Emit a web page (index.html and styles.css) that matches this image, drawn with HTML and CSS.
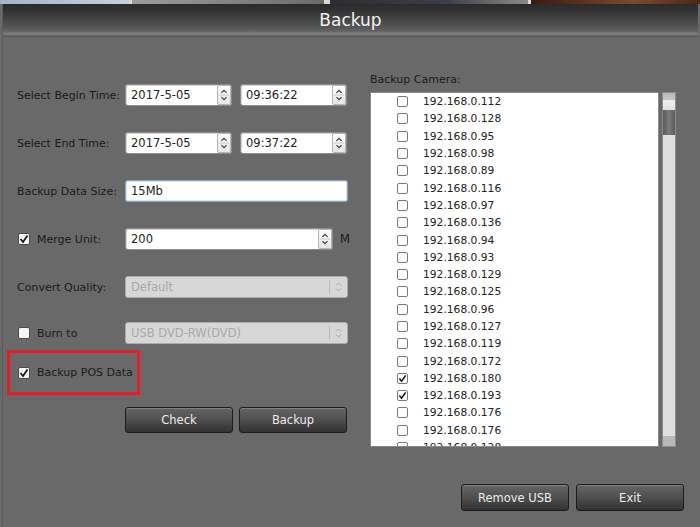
FILE: index.html
```html
<!DOCTYPE html>
<html lang="en">
<head>
    <meta charset="UTF-8">
    <title>Backup</title>
    <link rel="stylesheet" href="styles.css">
</head>
<body>
    <!-- Preview strip behind the dialog -->
    <div class="thumbs">
        <div class="thumb t1"></div>
        <div class="thumb t2"></div>
        <div class="thumb t3"></div>
        <div class="thumb t4"></div>
    </div>

    <div class="window">
        <div class="title-bar">Backup</div>

        <div class="main">
            <!-- Left: options -->
            <div class="left-col">
                <div class="form-rows">
                    <div class="row">
                        <span class="label">Select Begin Time:</span>
                        <div class="controls">
                            <div class="spin">
                                <span class="value">2017-5-05</span>
                                <svg class="arrows" width="14" height="20" viewBox="0 0 14 20"><path d="M4 7.5 L7 4.5 L10 7.5 M4 12.5 L7 15.5 L10 12.5" fill="none" stroke="#333" stroke-width="1.2"/><path d="M1 10 H13" stroke="#c4c4c4"/></svg>
                            </div>
                            <div class="spin">
                                <span class="value">09:36:22</span>
                                <svg class="arrows" width="14" height="20" viewBox="0 0 14 20"><path d="M4 7.5 L7 4.5 L10 7.5 M4 12.5 L7 15.5 L10 12.5" fill="none" stroke="#333" stroke-width="1.2"/><path d="M1 10 H13" stroke="#c4c4c4"/></svg>
                            </div>
                        </div>
                    </div>

                    <div class="row">
                        <span class="label">Select End Time:</span>
                        <div class="controls">
                            <div class="spin">
                                <span class="value">2017-5-05</span>
                                <svg class="arrows" width="14" height="20" viewBox="0 0 14 20"><path d="M4 7.5 L7 4.5 L10 7.5 M4 12.5 L7 15.5 L10 12.5" fill="none" stroke="#333" stroke-width="1.2"/><path d="M1 10 H13" stroke="#c4c4c4"/></svg>
                            </div>
                            <div class="spin">
                                <span class="value">09:37:22</span>
                                <svg class="arrows" width="14" height="20" viewBox="0 0 14 20"><path d="M4 7.5 L7 4.5 L10 7.5 M4 12.5 L7 15.5 L10 12.5" fill="none" stroke="#333" stroke-width="1.2"/><path d="M1 10 H13" stroke="#c4c4c4"/></svg>
                            </div>
                        </div>
                    </div>

                    <div class="row">
                        <span class="label">Backup Data Size:</span>
                        <div class="text-input"><span class="value">15Mb</span></div>
                    </div>

                    <div class="row">
                        <span class="label check-label">
                            <span class="box"><svg width="10" height="10" viewBox="0 0 10 10"><path d="M1.5 5 L4 8 L8.5 1.5" fill="none" stroke="#1a1a1a" stroke-width="1.8"/></svg></span>
                            Merge Unit:
                        </span>
                        <div class="controls">
                            <div class="spin wide">
                                <span class="value">200</span>
                                <svg class="arrows" width="14" height="20" viewBox="0 0 14 20"><path d="M4 7.5 L7 4.5 L10 7.5 M4 12.5 L7 15.5 L10 12.5" fill="none" stroke="#333" stroke-width="1.2"/><path d="M1 10 H13" stroke="#c4c4c4"/></svg>
                            </div>
                            <span class="unit">M</span>
                        </div>
                    </div>

                    <div class="row">
                        <span class="label">Convert Quality:</span>
                        <div class="combo">
                            <span class="value">Default</span>
                            <svg class="combo-arrows" width="16" height="16" viewBox="0 0 16 16"><path d="M0.5 1 V15" stroke="#bcbcbc"/><path d="M7 6.5 L9.5 4 L12 6.5 M7 9.5 L9.5 12 L12 9.5" fill="none" stroke="#a8a8a8" stroke-width="1"/></svg>
                        </div>
                    </div>

                    <div class="row row-burn">
                        <span class="label check-label">
                            <span class="box"></span>
                            Burn to
                        </span>
                        <div class="combo">
                            <span class="value">USB DVD-RW(DVD)</span>
                            <svg class="combo-arrows" width="16" height="16" viewBox="0 0 16 16"><path d="M0.5 1 V15" stroke="#bcbcbc"/><path d="M7 6.5 L9.5 4 L12 6.5 M7 9.5 L9.5 12 L12 9.5" fill="none" stroke="#a8a8a8" stroke-width="1"/></svg>
                        </div>
                    </div>
                </div>

                <!-- Highlighted option -->
                <div class="pos-box">
                    <span class="check-label">
                        <span class="box"><svg width="10" height="10" viewBox="0 0 10 10"><path d="M1.5 5 L4 8 L8.5 1.5" fill="none" stroke="#1a1a1a" stroke-width="1.8"/></svg></span>
                        Backup POS Data
                    </span>
                </div>

                <div class="action-row">
                    <button class="btn">Check</button>
                    <button class="btn">Backup</button>
                </div>
            </div>

            <!-- Right: camera list -->
            <div class="right-col">
                <div class="cam-title">Backup Camera:</div>
                <div class="cam-box">
                    <div class="cam-list" id="cam-list"></div>
                    <div class="scrollbar">
                        <div class="sb-cap"></div>
                        <div class="sb-thumb"></div>
                        <div class="sb-track"></div>
                        <div class="sb-end"></div>
                    </div>
                </div>
            </div>
        </div>

        <div class="footer">
            <button class="btn big">Remove USB</button>
            <button class="btn big">Exit</button>
        </div>
    </div>

    <script>
        // Camera list
        const cameras = [
            ['192.168.0.112', false], ['192.168.0.128', false], ['192.168.0.95', false],
            ['192.168.0.98', false], ['192.168.0.89', false], ['192.168.0.116', false],
            ['192.168.0.97', false], ['192.168.0.136', false], ['192.168.0.94', false],
            ['192.168.0.93', false], ['192.168.0.129', false], ['192.168.0.125', false],
            ['192.168.0.96', false], ['192.168.0.127', false], ['192.168.0.119', false],
            ['192.168.0.172', false], ['192.168.0.180', true], ['192.168.0.193', true],
            ['192.168.0.176', false], ['192.168.0.176', false], ['192.168.0.128', false]
        ];
        const tick = '<svg width="9" height="9" viewBox="0 0 10 10"><path d="M1.5 5 L4 8 L8.5 1.5" fill="none" stroke="#1a1a1a" stroke-width="1.8"/></svg>';
        const list = document.getElementById('cam-list');
        cameras.forEach(([ip, on]) => {
            const row = document.createElement('div');
            row.className = 'cam-row';
            row.innerHTML = '<span class="cam-box-check">' + (on ? tick : '') + '</span><span>' + ip + '</span>';
            list.appendChild(row);
        });
    </script>
</body>
</html>
```

FILE: styles.css
```css
/* General Reset */
* {
    margin: 0;
    padding: 0;
    box-sizing: border-box;
}

body {
    width: 700px;
    height: 527px;
    overflow: hidden;
    background-color: #6a6969;
    color: #1a1a1a;
    font-family: "DejaVu Sans", sans-serif;
    font-size: 11px;
}

/* Preview strip */
.thumbs {
    display: flex;
    height: 4px;
    background-color: #d8d8d8;
}

.t1 {
    width: 129px;
    background: linear-gradient(90deg, #a3b4c6, #c7d0da);
}

.t2 {
    width: 192px;
    margin-left: 3px;
    background: linear-gradient(90deg, #9d9d9d, #6a6a6a);
}

.t3 {
    width: 198px;
    margin-left: 6px;
    background: linear-gradient(90deg, #2c2c30, #3c4048 60%, #8a8a8a);
}

.t4 {
    flex: 1;
    margin-left: 3px;
    background: linear-gradient(90deg, #3a1a10, #7a4a30 60%, #4a2818);
}

/* Window */
.window {
    height: 523px;
    margin: 0 2px;
    display: flex;
    flex-direction: column;
    border-left: 1px solid #5c5c5c;
}

.title-bar {
    height: 33px;
    background: linear-gradient(#2b2b2b 0%, #333333 22%, #555555 70%, #626262 82%, #7a7a7a 88%, #777777 93%, #4e4e4e 100%);
    color: #f2f2f2;
    font-size: 17px;
    text-align: center;
    line-height: 32px;
}

.main {
    display: flex;
    align-items: flex-start;
}

/* Left column */
.left-col {
    width: 347px;
    padding: 47px 0 0 4px;
}

.form-rows {
    display: flex;
    flex-direction: column;
    gap: 26px;
    padding-left: 10px;
}

.row {
    display: flex;
    align-items: center;
    height: 22px;
}

.row-burn {
    margin-top: -2px;
}

.label {
    width: 108px;
    white-space: nowrap;
}

.controls {
    display: flex;
    align-items: center;
    gap: 8px;
}

.spin {
    width: 107px;
    height: 22px;
    display: flex;
    align-items: center;
    background-color: #ffffff;
    border: 1px solid #8c8c8c;
    border-radius: 3px;
    box-shadow: inset 1px 1px 1px rgba(0, 0, 0, 0.18);
}

.spin.wide {
    width: 208px;
}

.value {
    flex: 1;
    padding-left: 5px;
    font-size: 11.5px;
    color: #222;
}

.arrows {
    border: 1px solid #b4b4b4;
    border-radius: 2px;
    background: linear-gradient(#fdfdfd, #e6e6e6);
}

.unit {
    margin-left: -1px;
    font-size: 11.5px;
}

.text-input {
    width: 223px;
    height: 22px;
    display: flex;
    align-items: center;
    background-color: #ffffff;
    border: 1px solid #8fa6c0;
    border-radius: 3px;
    box-shadow: inset 0 0 0 1px #d4e2f2;
}

.combo {
    width: 223px;
    height: 22px;
    display: flex;
    align-items: center;
    background-color: #d7d7d7;
    border: 1px solid #acacac;
    border-radius: 3px;
}

.combo .value {
    color: #a9a9a9;
}

.combo-arrows {
    margin-right: 2px;
}

/* Checkboxes */
.check-label {
    display: flex;
    align-items: center;
    gap: 7px;
    padding-left: 1px;
    white-space: nowrap;
}

.box {
    width: 12px;
    height: 12px;
    display: flex;
    align-items: center;
    justify-content: center;
    background-color: #f4f4f4;
    border: 1px solid #4a4a4a;
    border-radius: 2px;
}

/* Highlighted POS option */
.pos-box {
    width: 133px;
    height: 45px;
    margin-top: 6px;
    padding-left: 7px;
    display: flex;
    align-items: center;
    border: 3px solid #e41f2b;
    font-size: 11px;
}

/* Buttons */
.action-row {
    display: flex;
    gap: 6px;
    margin-top: 12px;
    padding-left: 118px;
}

.btn {
    width: 108px;
    height: 26px;
    background: linear-gradient(#656565 0%, #515151 45%, #3d3d3d 80%, #333333 100%);
    border: 1px solid #1c1c1c;
    border-radius: 3px;
    box-shadow: inset 0 1px 0 rgba(255, 255, 255, 0.18);
    color: #ececec;
    font-family: "DejaVu Sans", sans-serif;
    font-size: 11.5px;
}

.btn.big {
    height: 27px;
}

/* Right column */
.right-col {
    margin-left: 20px;
    padding-top: 36px;
}

.cam-title {
    line-height: 14px;
    margin-bottom: 5px;
}

.cam-box {
    display: flex;
    gap: 3px;
    height: 355px;
}

.cam-list {
    width: 289px;
    background-color: #ffffff;
    border: 1px solid #8a8a8a;
    overflow: hidden;
}

.cam-row {
    height: 17.3px;
    display: flex;
    align-items: center;
    gap: 15px;
    padding-left: 26px;
    font-size: 10.7px;
    color: #222;
}

.cam-box-check {
    width: 11px;
    height: 11px;
    display: flex;
    align-items: center;
    justify-content: center;
    border: 1px solid #7a7a7a;
    border-radius: 2px;
    background-color: #ffffff;
}

/* Scrollbar */
.scrollbar {
    width: 14px;
    display: flex;
    flex-direction: column;
    background-color: #dcdcdc;
    border: 1px solid #8c8c8c;
}

.sb-cap {
    height: 17px;
    background: linear-gradient(#b8b8b8 0%, #c6c6c6 40%, #f0f0f0 45%, #e0e0e0 100%);
}

.sb-thumb {
    height: 25px;
    background: linear-gradient(90deg, #5a5a5a, #7a7a7a 50%, #5c5c5c);
}

.sb-track {
    flex: 1;
    background-color: #dedede;
}

.sb-end {
    height: 10px;
    background-color: #b8b8b8;
}

/* Footer buttons */
.footer {
    display: flex;
    justify-content: flex-end;
    gap: 7px;
    margin-top: 37px;
    padding-right: 14px;
}
```
